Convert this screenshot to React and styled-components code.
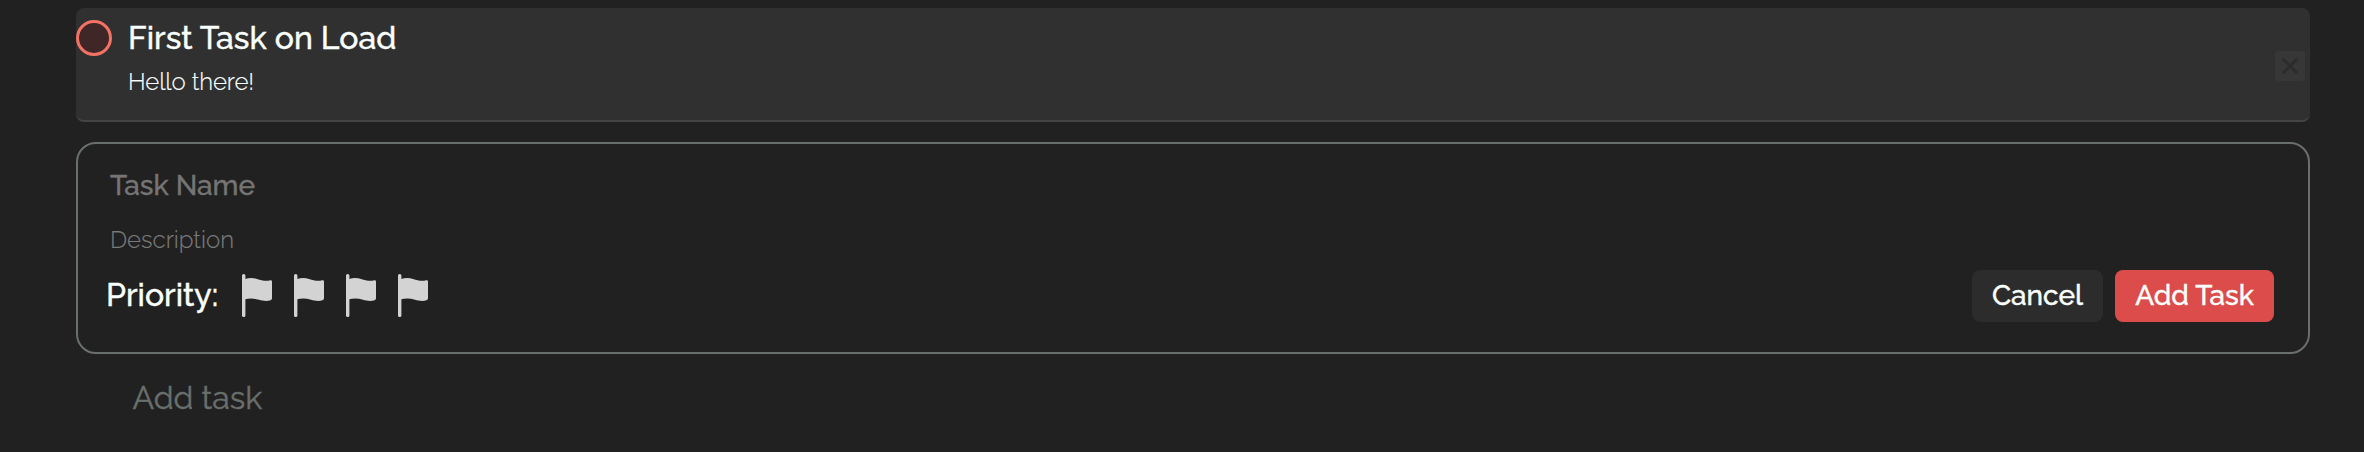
import React from "react";
import styled, { createGlobalStyle } from "styled-components";

const GlobalStyle = createGlobalStyle`
  *, *::before, *::after { box-sizing: border-box; }
  body {
    margin: 0;
    background: #212121;
    color: #f9fffc;
    font-family: Raleway, Lato, "Liberation Sans", sans-serif;
  }
`;

const Page = styled.main`
  display: flex;
  flex-direction: column;
  width: 2364px;
  height: 452px;
  padding: 8px 54px 0 76px;
  overflow: hidden;
`;

const TaskCard = styled.article`
  display: flex;
  align-items: flex-start;
  height: 114px;
  padding: 9px 5px 0 0;
  background: #303030;
  border-bottom: 2px solid #444;
  border-radius: 8px;
`;

const CheckCircle = styled.button`
  width: 36px;
  height: 36px;
  margin: 3px 16px 0 0;
  padding: 0;
  border: 3px solid #f47264;
  border-radius: 50%;
  background: #3e2726;
`;

const TaskBody = styled.div`
  display: flex;
  flex-direction: column;
  flex: 1;
  padding-top: 1px;
`;

const Label = styled.span`
  display: block;
  white-space: nowrap;
  color: ${(p) => p.$color || "#f9fffc"};
  font-size: ${(p) => p.$size}px;
  line-height: ${(p) => p.$line}px;
  font-weight: ${(p) => p.$weight};
  letter-spacing: ${(p) => p.$spacing || 0}px;
  -webkit-text-stroke: ${(p) => (p.$weight < 400 ? 0.15 : 0.4)}px currentColor;
`;

const DeleteButton = styled.button`
  display: grid;
  place-items: center;
  width: 30px;
  height: 30px;
  margin-top: 34px;
  padding: 0;
  border: 0;
  border-radius: 4px;
  background: #373737;
`;

const TaskForm = styled.form`
  display: flex;
  flex-direction: column;
  height: 212px;
  margin-top: 20px;
  padding: 22px 34px 0 32px;
  border: 2px solid #696f6c;
  border-radius: 20px;
`;

const Field = styled.div`
  height: ${(p) => p.$height}px;
`;

const FormFooter = styled.div`
  display: flex;
  align-items: flex-start;
  margin-left: -4px;
`;

const PriorityLabel = styled.div`
  width: 136px;
  padding-top: 7px;
`;

const Flags = styled.div`
  display: flex;
  gap: 22px;
  padding-top: 4px;
`;

const FlagIcon = styled.svg`
  display: block;
  width: 30px;
  height: 43px;
`;

const Actions = styled.div`
  display: flex;
  gap: 12px;
  margin-left: auto;
`;

const Button = styled.button`
  display: flex;
  align-items: center;
  justify-content: center;
  width: ${(p) => p.$width}px;
  height: 52px;
  padding: 0;
  border: 0;
  border-radius: 8px;
  font-family: inherit;
  background: ${(p) => (p.$primary ? "#dc4c4a" : "#2c2c2c")};
`;

const AddTaskLink = styled.div`
  margin: 24px 0 0 56.5px;
`;

function Flag() {
  return (
    <FlagIcon viewBox="0 0 30 43">
      <rect x="0" y="0" width="3.4" height="43" rx="1.6" fill="#d3d3d3" />
      <path
        d="M3 5C7 3.8 11.5 3.8 15 5C20 6.7 24 7.4 28.2 6.3Q30 6 30 7.6V24.3Q30 25.8 28.5 26.3C25 27.5 20.5 26.9 17 25.8C12.5 24.4 8.5 24 3 25.2Z"
        fill="#d3d3d3"
      />
    </FlagIcon>
  );
}

export default function App() {
  return (
    <>
      <GlobalStyle />
      <Page>
        <TaskCard>
          <CheckCircle type="button" aria-label="Complete task" />
          <TaskBody>
            <Label $size={32} $line={40} $weight={500}>First Task on Load</Label>
            <Label $size={24} $line={48} $weight={300} $spacing={-0.1}>Hello there!</Label>
          </TaskBody>
          <DeleteButton type="button" aria-label="Delete task">
            <svg width="16" height="16" viewBox="0 0 16 16">
              <path d="M1.7 1.7L14.3 14.3M14.3 1.7L1.7 14.3" stroke="#2c2c2c" strokeWidth="3" strokeLinecap="round" />
            </svg>
          </DeleteButton>
        </TaskCard>
        <TaskForm>
          <Field $height={55}>
            <Label $size={28} $line={40} $weight={500} $color="#757575">Task Name</Label>
          </Field>
          <Field $height={49}>
            <Label $size={24} $line={38} $weight={300} $color="#7a7a7a">Description</Label>
          </Field>
          <FormFooter>
            <PriorityLabel>
              <Label $size={32} $line={36} $weight={500}>Priority:</Label>
            </PriorityLabel>
            <Flags>
              <Flag />
              <Flag />
              <Flag />
              <Flag />
            </Flags>
            <Actions>
              <Button type="button" $width={131}>
                <Label $size={28} $line={36} $weight={500}>Cancel</Label>
              </Button>
              <Button type="button" $width={159} $primary>
                <Label $size={28} $line={36} $weight={500}>Add Task</Label>
              </Button>
            </Actions>
          </FormFooter>
        </TaskForm>
        <AddTaskLink>
          <Label $size={32} $line={40} $weight={400} $color="#696f6c">Add task</Label>
        </AddTaskLink>
      </Page>
    </>
  );
}
